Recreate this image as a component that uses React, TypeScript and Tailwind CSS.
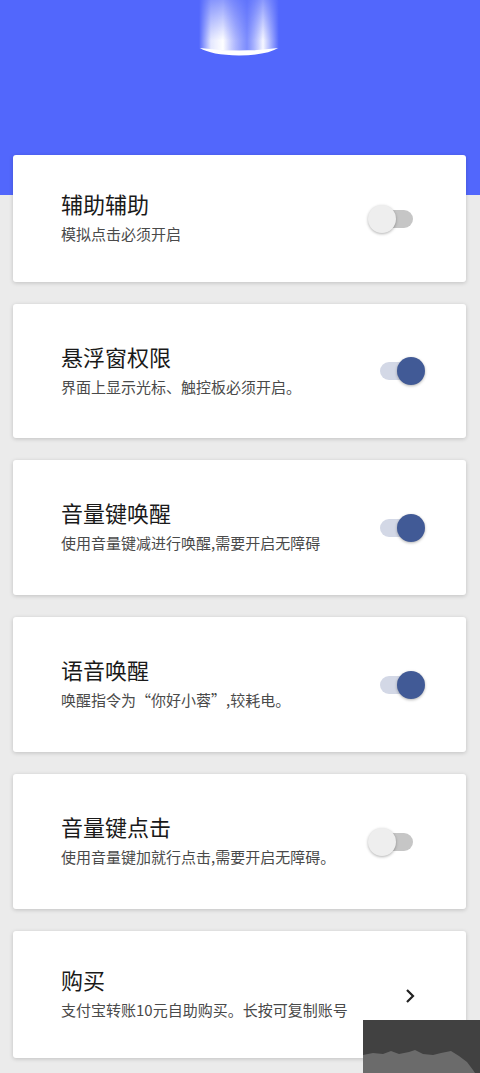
import React from "react";

type Row = {
  title: string;
  desc: string;
  kind: "on" | "off" | "arrow";
  h: string;
};

const rows: Row[] = [
  { title: "辅助辅助", desc: "模拟点击必须开启", kind: "off", h: "h-[127px]" },
  { title: "悬浮窗权限", desc: "界面上显示光标、触控板必须开启。", kind: "on", h: "h-[134px]" },
  { title: "音量键唤醒", desc: "使用音量键减进行唤醒,需要开启无障碍", kind: "on", h: "h-[135px]" },
  { title: "语音唤醒", desc: "唤醒指令为“你好小蓉”,较耗电。", kind: "on", h: "h-[135px]" },
  { title: "音量键点击", desc: "使用音量键加就行点击,需要开启无障碍。", kind: "off", h: "h-[135px]" },
  { title: "购买", desc: "支付宝转账10元自助购买。长按可复制账号", kind: "arrow", h: "h-[127px]" },
];

// switch: track sits under the knob, knob slides left/right
function Toggle({ on }: { on: boolean }) {
  const knob = on
    ? "bg-[#415a96] shadow-[0_1px_3px_rgba(0,0,0,0.3)]"
    : "bg-[#eeeeee] shadow-[0_1px_3px_rgba(0,0,0,0.3)]";
  return (
    <div className="w-[57px] h-[28px] flex items-center">
      {on ? (
        <>
          <div className="ml-[12px] w-[32px] h-[18px] rounded-full bg-[#d3d8e6]" />
          <div className={`-ml-[15px] w-[28px] h-[28px] rounded-full ${knob}`} />
        </>
      ) : (
        <>
          <div className={`relative z-10 w-[28px] h-[28px] rounded-full ${knob}`} />
          <div className="-ml-[16px] w-[33px] h-[18px] rounded-full bg-[#c6c6c6]" />
        </>
      )}
    </div>
  );
}

function Beam() {
  return (
    <svg width="84" height="58" viewBox="0 0 84 58" className="block">
      <defs>
        <linearGradient id="beam" x1="0" y1="0" x2="1" y2="0">
          <stop offset="0" stopColor="#ffffff" stopOpacity="0" />
          <stop offset="0.15" stopColor="#ffffff" stopOpacity="0.85" />
          <stop offset="0.3" stopColor="#ffffff" stopOpacity="1" />
          <stop offset="0.45" stopColor="#c8cdfd" stopOpacity="0.8" />
          <stop offset="0.6" stopColor="#9aa6fd" stopOpacity="0.6" />
          <stop offset="0.8" stopColor="#ffffff" stopOpacity="0.95" />
          <stop offset="1" stopColor="#ffffff" stopOpacity="0" />
        </linearGradient>
        <linearGradient id="fade" x1="0" y1="0" x2="0" y2="1">
          <stop offset="0" stopColor="#ffffff" stopOpacity="0.35" />
          <stop offset="0.7" stopColor="#ffffff" stopOpacity="1" />
        </linearGradient>
        <mask id="m">
          <rect x="0" y="0" width="84" height="58" fill="url(#fade)" />
        </mask>
      </defs>
      <path d="M2 0 H82 V49 Q42 53 2 49 Z" fill="url(#beam)" mask="url(#m)" />
      <path d="M3 48 Q42 53 81 48 Q70 55 42 55.5 Q14 55 3 48 Z" fill="#ffffff" />
    </svg>
  );
}

export default function App() {
  return (
    <div
      className="relative w-[480px] h-[1073px] overflow-hidden bg-[linear-gradient(#5267fc_0,#5267fc_195px,#ebebeb_195px)]"
      style={{ fontFamily: '"Noto Sans CJK SC", "Noto Sans", sans-serif' }}
    >
      {/* header light */}
      <div className="h-[155px] flex justify-center">
        <div className="-ml-[2px]">
          <Beam />
        </div>
      </div>

      <div className="pl-[13px] pr-[14px] flex flex-col gap-[22px]">
        {rows.map((r) => (
          <div
            key={r.title}
            className={`${r.h} bg-white rounded-[3px] shadow-[0_1px_4px_rgba(0,0,0,0.18)] flex items-center pl-[48px] pr-[41px]`}
          >
            <div className="flex-1 pb-[4px]">
              <div className="text-[22px] leading-[28px] text-[#1a1a1a]">{r.title}</div>
              <div className="mt-[7px] text-[15px] leading-[20px] text-[#4a4a4a]">{r.desc}</div>
            </div>
            {r.kind === "arrow" ? (
              <svg width="14" height="16" viewBox="0 0 14 16" className="mr-[8px] mt-[2px]">
                <path d="M4 2 L10 8 L4 14" fill="none" stroke="#222" strokeWidth="2.2" />
              </svg>
            ) : (
              <Toggle on={r.kind === "on"} />
            )}
          </div>
        ))}
      </div>

      {/* floating overlay bottom-right */}
      <div className="absolute left-[363px] top-[1020px] w-[117px] h-[53px] bg-[#414141]">
        <svg width="117" height="53" viewBox="0 0 117 53" className="block">
          <path
            d="M0 35 L10 33 L20 34 L28 31 L36 34 L46 32 L52 30 L60 34 L70 35 L78 33 L88 31 L96 36 L104 42 L110 50 L112 53 L0 53 Z"
            fill="#6b6b6b"
          />
        </svg>
      </div>
    </div>
  );
}
